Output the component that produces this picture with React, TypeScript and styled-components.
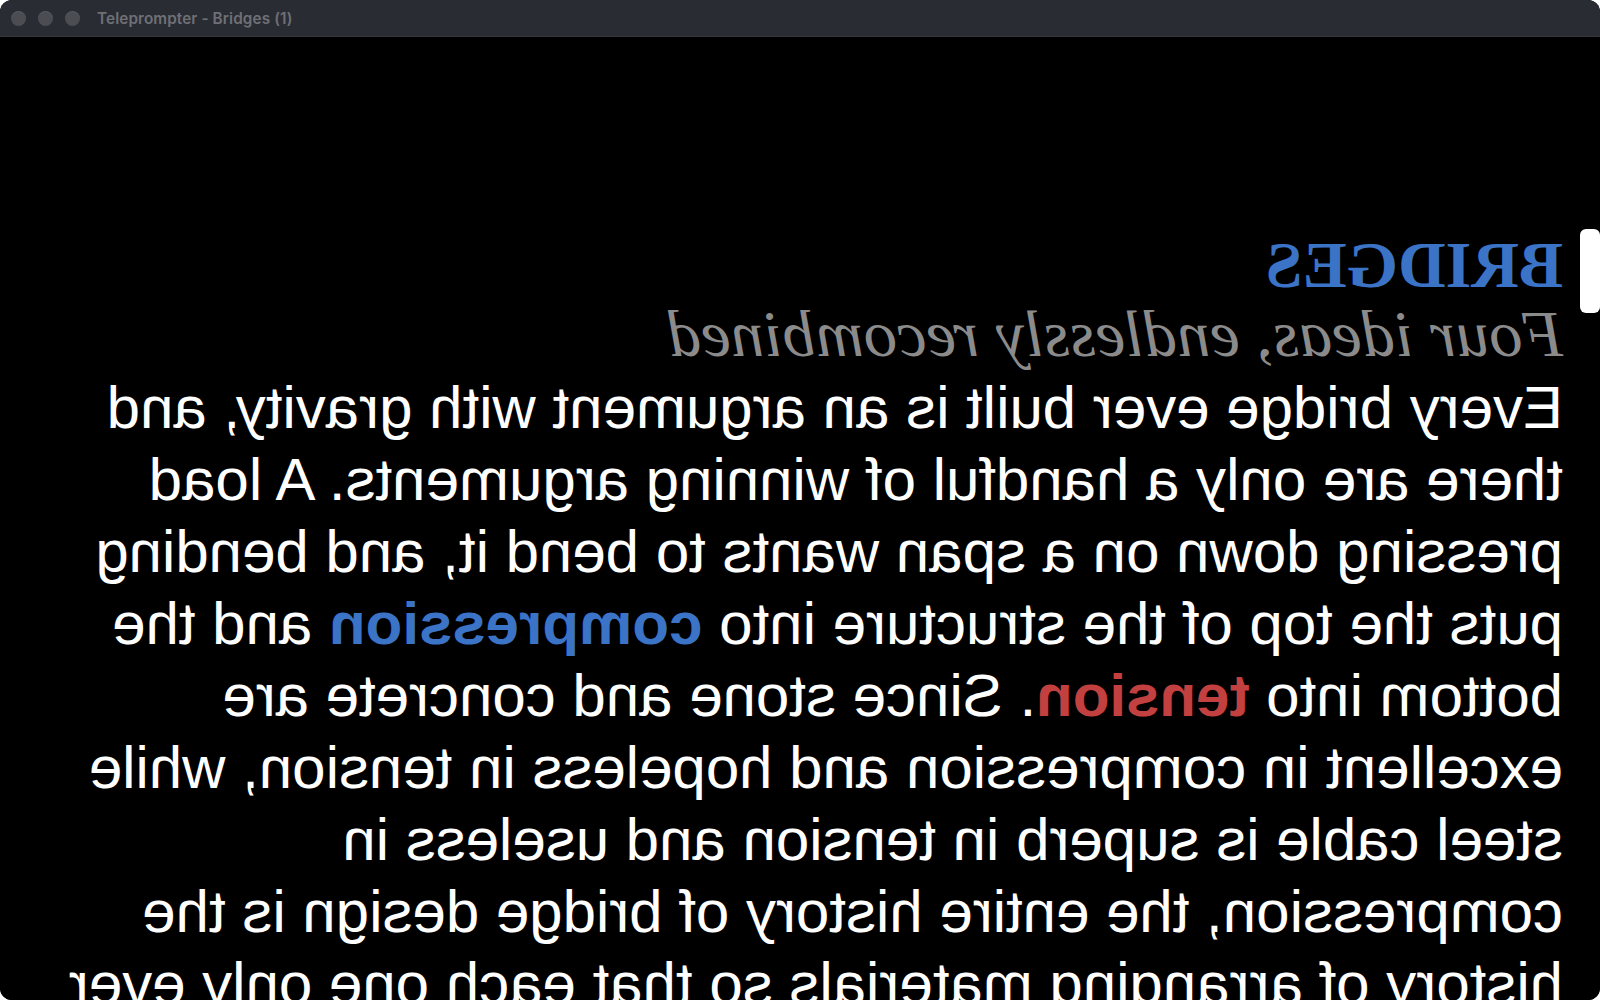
import React from "react";
import styled, { createGlobalStyle } from "styled-components";

const Global = createGlobalStyle`
  html, body { margin: 0; padding: 0; background: #ffffff; }
  body { font-family: "Liberation Sans", Arial, sans-serif; }
  * { box-sizing: border-box; }
`;

const Window = styled.div`
  width: 1600px;
  height: 1000px;
  border-radius: 12px;
  overflow: hidden;
  background: #000;
  display: flex;
  flex-direction: column;
`;

const TitleBar = styled.div`
  height: 37px;
  flex: 0 0 37px;
  background: #2a2c33;
  border-bottom: 1px solid #34363c;
  display: flex;
  align-items: center;
  padding-left: 11px;
  gap: 13px;
`;

const Lights = styled.div`
  display: flex;
  gap: 12px;
  align-items: center;
`;

const Light = styled.span`
  width: 15px;
  height: 15px;
  border-radius: 50%;
  background: #4b4d53;
  box-shadow: inset 0 1px 0 rgba(255, 255, 255, 0.08);
`;

const Title = styled.div`
  font-family: Inter, "Liberation Sans", sans-serif;
  font-weight: 600;
  font-size: 15.3px;
  color: #6e7076;
  margin-left: 4px;
  letter-spacing: 0.1px;
`;

const Stage = styled.div`
  position: relative;
  flex: 1;
  overflow: hidden;
  background: #000;
`;

const Mirror = styled.div`
  transform: scaleX(-1);
  padding: 193px 37px 0 37px;
`;

const Heading = styled.div`
  font-family: "Liberation Serif", "Times New Roman", serif;
  font-weight: 700;
  font-size: 66px;
  line-height: 69px;
  color: #3b73c6;
`;

const Subheading = styled.div`
  font-family: "Liberation Serif", "Times New Roman", serif;
  font-style: italic;
  font-size: 66.5px;
  line-height: 69px;
  color: #8b8b8b;
  margin-bottom: 4px;
`;

const Body = styled.p`
  margin: 0;
  font-family: "Liberation Sans", Arial, sans-serif;
  font-size: 60px;
  line-height: 72px;
  color: #ffffff;
`;

const Mark = styled.strong<{ $tone: "blue" | "red" }>`
  font-weight: 700;
  color: ${(p) => (p.$tone === "blue" ? "#3b73c6" : "#c2403f")};
`;

const Thumb = styled.div`
  position: absolute;
  right: 0;
  top: 192px;
  width: 20px;
  height: 84px;
  background: #ffffff;
  border-radius: 6px;
`;

export default function App() {
  return (
    <>
      <Global />
      <Window>
        <TitleBar>
          <Lights>
            <Light />
            <Light />
            <Light />
          </Lights>
          <Title>Teleprompter - Bridges (1)</Title>
        </TitleBar>
        <Stage>
          <Mirror>
            <Heading>BRIDGES</Heading>
            <Subheading>Four ideas, endlessly recombined</Subheading>
            <Body>
              Every bridge ever built is an argument with gravity, and there are only a
              handful of winning arguments. A load pressing down on a span wants to bend
              it, and bending puts the top of the structure into{" "}
              <Mark $tone="blue">compression</Mark> and the bottom into{" "}
              <Mark $tone="red">tension</Mark>. Since stone and concrete are excellent in
              compression and hopeless in tension, while steel cable is superb in tension
              and useless in compression, the entire history of bridge design is the
              history of arranging materials so that each one only ever does the work it
              is good at.
            </Body>
          </Mirror>
          <Thumb />
        </Stage>
      </Window>
    </>
  );
}
